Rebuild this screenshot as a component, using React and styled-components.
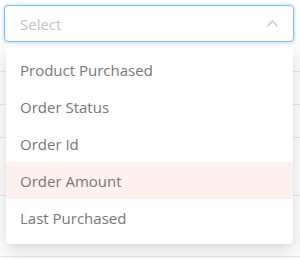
import React from "react";
import styled, { createGlobalStyle } from "styled-components";

const GlobalStyle = createGlobalStyle`
  body {
    margin: 0;
    background: #fff;
    font-family: "Open Sans", "Noto Sans", sans-serif;
  }
`;

const Page = styled.div`
  position: relative;
  width: 300px;
  height: 259px;
  overflow: hidden;
  padding: 5px 0 0 4px;
  box-sizing: border-box;
`;

const Field = styled.div`
  width: 290px;
  height: 37px;
  box-sizing: border-box;
  display: flex;
  align-items: center;
  justify-content: space-between;
  padding: 0 15px 0 15px;
  border: 1px solid #7fbcff;
  border-radius: 4px;
  box-shadow: 0 0 0 2px rgba(24, 144, 255, 0.12);
  background: #fff;
`;

const Placeholder = styled.span`
  font-size: 15px;
  color: #c2c2c2;
`;

const Backdrop = styled.div`
  margin-left: -4px;
`;

const Row = styled.div`
  height: ${(p) => p.$h}px;
  border-bottom: 1px solid #e9e9e9;
`;

const Menu = styled.ul`
  position: absolute;
  top: 47px;
  left: 6px;
  width: 287px;
  height: 197px;
  margin: 0;
  padding: 4px 0 0;
  box-sizing: border-box;
  list-style: none;
  background: #fff;
  border-radius: 4px;
  box-shadow: 0 3px 6px -4px rgba(0, 0, 0, 0.12),
    0 6px 16px 0 rgba(0, 0, 0, 0.08), 0 9px 28px 8px rgba(0, 0, 0, 0.05);
`;

const Item = styled.li`
  height: 37px;
  display: flex;
  align-items: center;
  padding-left: 14px;
  font-size: 15px;
  color: #777;
  background: ${(p) => (p.$active ? "#fff1ef" : "transparent")};
`;

const options = [
  "Product Purchased",
  "Order Status",
  "Order Id",
  "Order Amount",
  "Last Purchased",
];

const App = () => {
  return (
    <>
      <GlobalStyle />
      <Page>
        <Field>
          <Placeholder>Select</Placeholder>
          <svg width="11" height="7" viewBox="0 0 11 7" fill="none">
            <polyline
              points="0.5,6.5 5.5,1 10.5,6.5"
              stroke="#c4c4c4"
              strokeWidth="1.2"
            />
          </svg>
        </Field>
        <Backdrop>
          <Row $h={29} />
          <Row $h={32} />
          <Row $h={32} />
          <Row $h={57} />
          <Row $h={60} />
        </Backdrop>
        <Menu>
          {options.map((o) => (
            <Item key={o} $active={o === "Order Amount"}>
              {o}
            </Item>
          ))}
        </Menu>
      </Page>
    </>
  );
};

export default App;
